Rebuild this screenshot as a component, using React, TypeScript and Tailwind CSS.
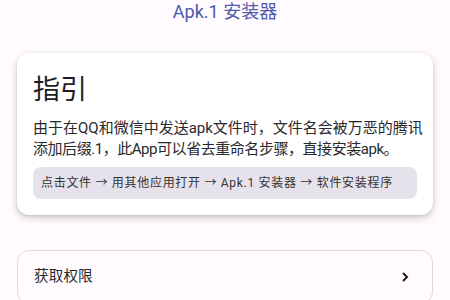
import React from "react";

export default function App() {
  return (
    <div
      className="w-[450px] h-[300px] overflow-hidden bg-[#fffbfe] text-[#1c1b1f]"
      style={{ fontFamily: "Roboto, 'Noto Sans CJK SC', sans-serif" }}
    >
      <div className="h-6 flex items-center justify-center text-[18px] leading-6 text-[#4d5aa9]">
        Apk.1 安装器
      </div>
      <div className="mx-[17px] mt-[29px] rounded-[12px] bg-white shadow-[0_3px_8px_rgba(0,0,0,0.18),0_1px_3px_rgba(0,0,0,0.12)] px-4 pt-[19px] pb-[16px]">
        <div className="text-[27px] leading-[36px]">指引</div>
        <div className="mt-[10px] w-[400px] whitespace-nowrap text-[15px] leading-[21px] text-[#2a282d]">
          <div className="tracking-[0px]">由于在QQ和微信中发送apk文件时，文件名会被万恶的腾讯</div>
          <div className="tracking-[-0.45px]">添加后缀.1，此App可以省去重命名步骤，直接安装apk。</div>
        </div>
        <div className="mt-[7px] rounded-[8px] bg-[#e6e2ec] px-2 h-[32px] flex items-center text-[12px] tracking-[0.7px] text-[#333]">
          点击文件 → 用其他应用打开 → Apk.1 安装器 → 软件安装程序
        </div>
      </div>
      <div className="mx-[17px] mt-[35px] h-[54px] rounded-[12px] border border-[#dcd8dc] bg-[#fffbfe] pl-4 pr-[22px] flex items-center justify-between">
        <span className="text-[14.6px] tracking-[0.1px] text-[#2a282d]">获取权限</span>
        <svg width="10" height="12" viewBox="0 0 10 12">
          <polyline points="3,2 7,6 3,10" fill="none" stroke="#1c1b1f" strokeWidth="2" />
        </svg>
      </div>
    </div>
  );
}
